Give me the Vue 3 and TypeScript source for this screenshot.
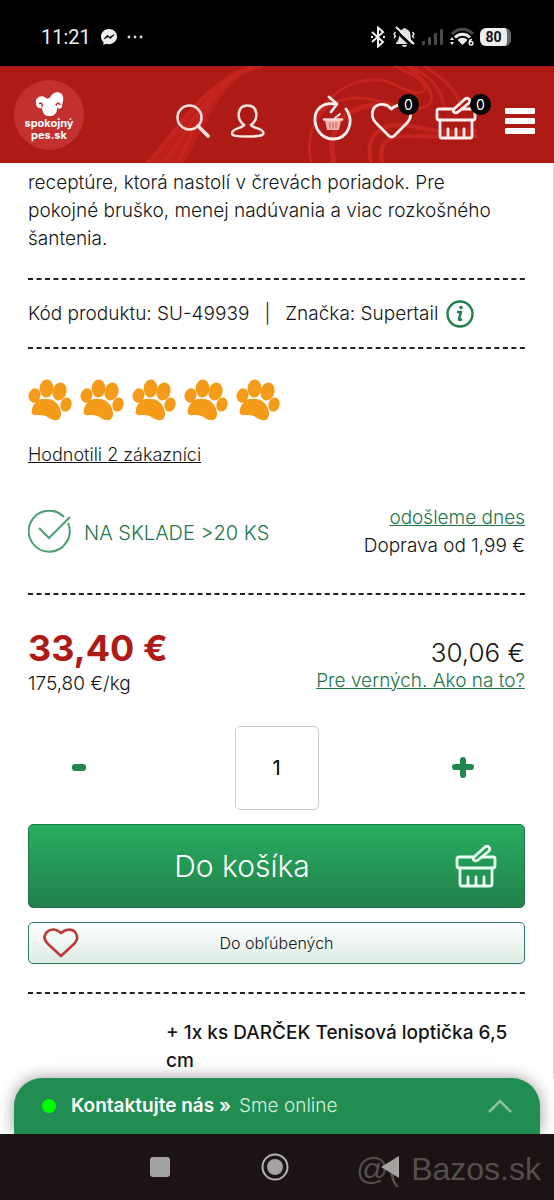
<script setup lang="ts">
import { ref } from 'vue'

const quantity = ref('1')
const paws = [1, 2, 3, 4, 5]

function step(delta: number): void {
  const next = (parseInt(quantity.value, 10) || 1) + delta
  quantity.value = String(Math.max(1, next))
}
</script>

<template>
  <div class="screen">
    <div class="status">
      <span class="time">11:21</span>
      <svg class="messenger" width="16" height="16" viewBox="0 0 16 16">
        <path d="M8 0C3.500 0 0 3.300 0 7.600c0 2.300 1 4.200 2.500 5.600V16l2.700-1.200c.9.300 1.800.400 2.800.400 4.500 0 8-3.300 8-7.600S12.500 0 8 0z" fill="#eee" />
        <path d="M3 9.800l3.400-3.600 2.400 2 4.200-2.600-3.500 4-2.400-1.900z" fill="#000" stroke="#000" stroke-width=".8" />
      </svg>
      <svg width="16" height="4" viewBox="0 0 16 4" fill="#ddd">
        <circle cx="2" cy="2" r="1.400" /><circle cx="8" cy="2" r="1.400" /><circle cx="14" cy="2" r="1.400" />
      </svg>
      <div class="indicators">
        <svg width="16" height="22" viewBox="0 0 16 22" fill="none" stroke="#eee" stroke-width="2">
          <path d="M2 6l11 10-5 4.500v-19L13 6 2 16" />
          <path d="M1 11h2M13 11h2" />
        </svg>
        <svg width="24" height="22" viewBox="0 0 24 22">
          <path d="M4 17c2-2 3-4 3-8 0-3 2-5.500 4.500-6V2h2v1c3 .5 5 3 5 6s.5 6 2.500 8v1H4zM10 19h5a2.500 2 0 0 1-5 0z" fill="#e2e2e2" />
          <path d="M2 3l18 17" stroke="#000" stroke-width="3" />
          <path d="M4 1l18 17" stroke="#eee" stroke-width="2" />
          <path d="M3.500 6L2 8l1.500 2L2 12M20.500 6L22 8l-1.500 2 1.500 2" fill="none" stroke="#ddd" stroke-width="1.500" />
        </svg>
        <svg width="22" height="18" viewBox="0 0 22 18" fill="#4a4a4a">
          <rect x="0" y="13" width="3" height="4" rx="1" /><rect x="6" y="9" width="3" height="8" rx="1" />
          <rect x="12" y="5" width="3" height="12" rx="1" /><rect x="18" y="1" width="3" height="16" rx="1" />
        </svg>
        <svg width="24" height="20" viewBox="0 0 24 20">
          <path d="M2 7c6-6.500 15-6.500 21 0" fill="none" stroke="#4a4a4a" stroke-width="3" />
          <path d="M5 10.500c4-4.500 11-4.500 15 0" fill="none" stroke="#eee" stroke-width="3" />
          <path d="M7.500 13c2.500-3 7.500-3 10 0l-5 5z" fill="#eee" />
          <path d="M0 13l2-3 2 3zM0 15l2 3 2-3z" fill="#eee" />
          <path d="M22 12.500c-3-.5-4 5.500-1 5.500 2.500 0 2.500-3.500 0-3.500-1 0-1.500 1-1.500 1" fill="none" stroke="#000" stroke-width="4" />
          <path d="M22 12.500c-3-.5-4 5.500-1 5.500 2.500 0 2.500-3.500 0-3.500-1 0-1.500 1-1.500 1" fill="none" stroke="#eee" stroke-width="1.500" />
        </svg>
        <span class="battery">80</span>
      </div>
    </div>

    <header class="header">
      <svg class="swirl" viewBox="0 0 554 97" preserveAspectRatio="none" fill="none" stroke="#c6241f">
        <path d="M145 97C178 65 205 8 262 -1l-10 2C218 22 206 60 184 97z" fill="#be211c" stroke="none" />
        <path d="M148 97C180 62 208 8 262 0M164 97C190 62 208 18 252 1M178 97C195 62 210 22 250 1" stroke-width="4" />
        <path d="M318 48C334 22 358 12 380 14c18 2 28 16 42 12 9-4-2-16-28-26" stroke-width="3" />
        <path d="M311 97c-6-30 6-58 32-63 34-8 50 12 78 8 20-4 10-24-14-42" stroke-width="3" />
        <path d="M334 97c-8-32 8-56 42-58" stroke-width="5" />
        <path d="M424 0c18 12 32 22 38 42M408 0c20 8 34 22 36 42" stroke-width="3" />
        <path d="M371 97c-6-24 6-40 32-38 20 2 38 10 74 6M382 97c-4-20 6-28 28-27 20 0 36 2 68 0" stroke-width="4" />
      </svg>
      <a class="logo" href="#">
        <svg width="30" height="26" viewBox="0 0 30 26">
          <path d="M12 7c2 1 4 0 5-2 3-5 11-5 12 1 1 4-1 6-1 9s-4 4-5 1c0 3 0 5-2 7-3 3-8 3-11 0-1-2-2-4-2-6-3 1-6-1-6-5C1 7 7 3 12 7z" fill="#fff" />
          <path d="M5 13c2-2 4 0 3 3M22 15c0-3 3-4 4-1" fill="none" stroke="#c2312d" stroke-width="1.500" />
        </svg>
        <span class="logo-name">spokojný<br />pes.sk</span>
      </a>
      <div class="group account">
        <button class="icon" aria-label="Hľadať">
          <svg width="34" height="34" viewBox="0 0 34 34" fill="none" stroke="#ffe4e0" stroke-width="2.500">
            <circle cx="13.500" cy="13.500" r="12" /><path d="M22 22l10 10" stroke-width="3.500" stroke-linecap="round" />
          </svg>
        </button>
        <button class="icon" aria-label="Účet">
          <svg width="34" height="34" viewBox="0 0 34 34" fill="none" stroke="#ffe4e0" stroke-width="2.500">
            <path d="M13 21C5 15 6 1.500 16.500 1.500S28 15 20 21c1 3 12 3 12.500 8 0 3-5 3.500-16 3.500S.5 32 1 29c.5-5 11-5 12-8z" />
          </svg>
        </button>
      </div>
      <div class="group shop">
        <button class="icon reorder" aria-label="Objednať znova">
          <svg width="40" height="46" viewBox="0 0 40 46" fill="none" stroke="#fff0ee" stroke-width="2.800" stroke-linecap="round" stroke-linejoin="round">
            <path d="M22 9C9 7 1 15 2 26c1 11 9 18 18 18 15 0 22-17 13-30" />
            <path d="M16 2l8 7-6 8" />
            <path d="M12 25h16l-2 10H14z" fill="#eeb0aa" stroke="none" />
            <path d="M11 24.500h18" stroke="#ffd6d1" stroke-width="2.500" />
            <path d="M17 28v5M20 28v5M23 28v5" stroke="#c2554e" stroke-width="1" />
            <path d="M22 23l5-4" stroke-width="1.800" />
          </svg>
        </button>
        <button class="icon wide" aria-label="Obľúbené">
          <svg width="42" height="38" viewBox="0 0 42 38" fill="none" stroke="#fff0ee" stroke-width="2.800" stroke-linejoin="round">
            <path d="M20.500 7C25 2 34 2 37 6c5 7 2 12-2 16L23 34q-2.500 2-5 0L6 22C1 17 0 11 3 6c5-6 13-4 17.500 1z" />
          </svg>
          <span class="badge">0</span>
        </button>
        <button class="icon basket" aria-label="Košík">
          <svg width="42" height="44" viewBox="0 0 42 44" fill="none" stroke="#fff0ee" stroke-width="2.800" stroke-linejoin="round" stroke-linecap="round">
            <path d="M19 13H4q-2 0-2 2v7q0 2 2 2h34q2 0 2-2v-7q0-2-2-2H27" />
            <path d="M5 24v16q0 2 2 2h28q2 0 2-2V24M13 41v-8M21 41v-8M29 41v-8" />
            <path d="M19 13L30 3c3-2 6 1 4 4L23 16c-3 2-6 0-4-3z" />
          </svg>
          <span class="badge">0</span>
        </button>
        <button class="icon" aria-label="Menu">
          <svg width="30" height="28" viewBox="0 0 30 28" fill="#fff">
            <rect y="1" width="30" height="6" rx="1" /><rect y="11" width="30" height="6" rx="1" /><rect y="21" width="30" height="6" rx="1" />
          </svg>
        </button>
      </div>
    </header>

    <main class="product">
      <p class="description">receptúre, ktorá nastolí v črevách poriadok. Pre pokojné bruško, menej nadúvania a viac rozkošného šantenia.</p>
      <svg class="rule"><line x1="0" y1="1" x2="100%" y2="1" /></svg>
      <div class="codes">
        <span>Kód produktu: SU-49939</span>
        <span class="bar">|</span>
        <span>Značka: Supertail</span>
        <svg class="info" width="28" height="28" viewBox="0 0 28 28" fill="none" stroke="#21804c">
          <circle cx="14" cy="14" r="12.500" stroke-width="2.400" />
          <path d="M11 12h4l-2 7q0 2 3 0" stroke-width="2.600" stroke-linejoin="round" />
          <circle cx="15" cy="7.500" r="1.800" fill="#21804c" stroke="none" />
        </svg>
      </div>
      <svg class="rule"><line x1="0" y1="1" x2="100%" y2="1" /></svg>

      <div class="paws">
        <svg v-for="paw in paws" :key="paw" width="44" height="42" viewBox="0 0 44 42" fill="#f49c1a">
          <ellipse cx="6.500" cy="16.500" rx="5.900" ry="7.200" transform="rotate(15 6.500 16.500)" />
          <ellipse cx="18.500" cy="9.500" rx="6.900" ry="9" transform="rotate(4 18.500 9.500)" />
          <ellipse cx="31.500" cy="12.500" rx="7" ry="9" transform="rotate(16 31.500 12.500)" />
          <ellipse cx="38" cy="25.500" rx="5.500" ry="7.200" transform="rotate(15 38 25.500)" />
          <path d="M4 30c2-8 8-11 15-10 9 0 14 8 14 15 0 8-8 7-12 4-4-3-7-3-12-3-5 1-6-2-5-6z" />
        </svg>
      </div>
      <a class="reviews" href="#">Hodnotili 2 zákazníci</a>

      <div class="stock">
        <svg width="44" height="44" viewBox="0 0 44 44" fill="none" stroke="#4c9f73" stroke-width="2">
          <path d="M36 7A20.500 20.500 0 1 0 40 13" /><path d="M11 18l10 10L42 7" />
        </svg>
        <span class="available">NA SKLADE &gt;20 KS</span>
        <div class="delivery">
          <a href="#">odošleme dnes</a>
          <span>Doprava od 1,99 €</span>
        </div>
      </div>
      <svg class="rule"><line x1="0" y1="1" x2="100%" y2="1" /></svg>

      <div class="prices">
        <div>
          <strong class="price">33,40 €</strong>
          <span>175,80 €/kg</span>
        </div>
        <div class="loyal">
          <span class="loyal-price">30,06 €</span>
          <a href="#">Pre verných. Ako na to?</a>
        </div>
      </div>

      <div class="quantity">
        <button class="step less" aria-label="Menej" @click="step(-1)">
          <svg width="22" height="22" viewBox="0 0 22 22"><rect x="4" y="7" width="14" height="7" rx="3" fill="#21874c" /></svg>
        </button>
        <input v-model="quantity" aria-label="Množstvo" type="text" inputmode="numeric" />
        <button class="step more" aria-label="Viac" @click="step(1)">
          <svg width="22" height="22" viewBox="0 0 22 22"><path d="M11 3v15M3 10h16" stroke="#21874c" stroke-width="6" stroke-linecap="round" /></svg>
        </button>
      </div>

      <button class="buy">
        <span>Do košíka</span>
        <svg width="42" height="44" viewBox="0 0 42 44" fill="none" stroke="#e6fff0" stroke-width="2.800" stroke-linejoin="round" stroke-linecap="round">
          <path d="M19 13H4q-2 0-2 2v7q0 2 2 2h34q2 0 2-2v-7q0-2-2-2H27" />
          <path d="M5 24v16q0 2 2 2h28q2 0 2-2V24M13 41v-8M21 41v-8M29 41v-8" />
          <path d="M19 13L30 3c3-2 6 1 4 4L23 16c-3 2-6 0-4-3z" />
        </svg>
      </button>
      <button class="favourite">
        <svg width="36" height="30" viewBox="0 0 36 30" fill="none" stroke="#bd3a39" stroke-width="2.600" stroke-linejoin="round">
          <path d="M18 5C22 1 29 .5 32 4c4 5 2 9-1 12L18 28 5 16C1 12 0 8 4 4c4-4 10-3 14 1z" />
        </svg>
        <span>Do obľúbených</span>
      </button>
      <svg class="rule"><line x1="0" y1="1" x2="100%" y2="1" /></svg>
      <p class="gift">+ 1x ks DARČEK Tenisová loptička 6,5 cm</p>
    </main>

    <button class="chat">
      <span class="dot"></span>
      <strong>Kontaktujte nás »</strong>
      <span class="online">Sme online</span>
      <svg width="24" height="14" viewBox="0 0 24 14" fill="none" stroke="#8fbf9f" stroke-width="2.500"><path d="M1 13L12 2l11 11" /></svg>
    </button>

    <nav class="system">
      <svg width="28" height="28" viewBox="0 0 28 28"><rect x="4" y="4" width="20" height="20" rx="3" fill="#a5a2a2" /></svg>
      <svg width="28" height="28" viewBox="0 0 28 28"><circle cx="14" cy="14" r="12.500" fill="none" stroke="#b5b2b2" stroke-width="2" /><circle cx="14" cy="14" r="8" fill="#a5a2a2" /></svg>
      <svg width="28" height="28" viewBox="0 0 28 28"><path d="M5 14L23 3v22z" fill="#a5a2a2" /></svg>
      <span class="watermark"><span>@(</span><span>Bazos.sk</span></span>
    </nav>
  </div>
</template>

<style>
body {
  margin: 0;
  background: #fff;
}
</style>

<style scoped>
.screen {
  min-height: 100vh;
  display: flex;
  flex-direction: column;
  font-family: Inter, "Open Sans", sans-serif;
  font-size: 19px;
  font-weight: 300;
  line-height: 28px;
  color: #161616;
}
button {
  padding: 0;
  border: 0;
  background: none;
  font: inherit;
  color: inherit;
  cursor: pointer;
}
svg {
  display: block;
  flex: none;
}
.status {
  display: flex;
  align-items: center;
  gap: 10px;
  height: 58px;
  padding: 8px 43px 0 41px;
  background: #000;
  color: #eee;
}
.time {
  font: 400 20px/24px Roboto, sans-serif;
}
.indicators {
  display: flex;
  align-items: center;
  gap: 6px;
  margin-left: auto;
}
.battery {
  width: 31px;
  box-sizing: border-box;
  border-right: 4px solid #666;
  border-radius: 6px;
  background: #eee;
  color: #111;
  font: 700 14px/18px Roboto, sans-serif;
  text-align: center;
}
.header {
  position: relative;
  display: flex;
  align-items: center;
  height: 97px;
  padding: 0 19px 0 14px;
  background: #ae1b17;
}
.swirl {
  position: absolute;
  inset: 0;
  width: 100%;
  height: 100%;
}
.logo {
  position: relative;
  display: flex;
  flex-direction: column;
  align-items: center;
  width: 70px;
  height: 59px;
  padding-top: 11px;
  border-radius: 50%;
  background: #c2312d;
  color: #fff;
  text-decoration: none;
}
.logo-name {
  font: 700 11px/12px Inter, sans-serif;
  text-align: center;
}
.group {
  position: relative;
  display: flex;
  align-items: center;
}
.account {
  gap: 21px;
  margin: 12px 0 0 auto;
}
.shop {
  gap: 18px;
  margin: 12px 0 0 48px;
}
.icon {
  position: relative;
}
.reorder {
  margin-bottom: 6px;
}
.wide {
  width: 46px;
}
.basket {
  width: 52px;
  margin-bottom: 6px;
}
.badge {
  position: absolute;
  top: -8px;
  right: -2px;
  width: 21px;
  border-radius: 50%;
  background: #000;
  color: #fff;
  font-size: 14px;
  font-weight: 400;
  line-height: 21px;
}
.basket .badge {
  top: -2px;
  right: -4px;
}
.product {
  flex: 1;
  display: flex;
  flex-direction: column;
  padding: 6px 28px 0;
  border-right: 1px solid #d8d8d8;
}
.description {
  margin: 0 0 25px;
  padding-right: 14px;
}
.rule {
  width: 100%;
  height: 2px;
}
.rule line {
  stroke: #222;
  stroke-width: 2;
  stroke-dasharray: 5 3.480;
}
.codes {
  display: flex;
  align-items: center;
  height: 67px;
}
.bar {
  margin: 0 15px;
}
.info {
  margin-left: 8px;
}
.paws {
  display: flex;
  gap: 8px;
  margin-top: 30px;
}
.reviews {
  align-self: flex-start;
  margin-top: 20px;
  color: inherit;
  font-size: 18px;
}
.stock {
  display: flex;
  align-items: center;
  margin: 35px 0 33px;
}
.available {
  margin: 2px 0 0 12px;
  color: #21764a;
  font-size: 20px;
}
.delivery,
.loyal {
  display: flex;
  flex-direction: column;
  align-items: flex-end;
  margin-left: auto;
}
.delivery a,
.loyal a {
  color: #21764a;
}
.prices {
  display: flex;
  margin-top: 31px;
}
.price {
  display: block;
  color: #ae1b17;
  font-size: 36px;
  font-weight: 700;
  line-height: 44px;
}
.loyal {
  padding-top: 13px;
}
.loyal-price {
  font-size: 26px;
}
.quantity {
  display: grid;
  grid-template-columns: 1fr 84px 1fr;
  align-items: center;
  margin: 28px 0 14px;
}
.step {
  width: 44px;
  height: 44px;
  display: grid;
  place-items: center;
}
.less {
  margin-left: 29px;
}
.more {
  justify-self: end;
  margin-right: 40px;
}
.quantity input {
  height: 84px;
  box-sizing: border-box;
  min-width: 0;
  border: 1px solid #ccc;
  border-radius: 5px;
  background: #fff;
  color: #000;
  font: 400 20px/28px Inter, sans-serif;
  text-align: center;
}
.buy {
  display: grid;
  grid-template-columns: 1fr 42px;
  align-items: center;
  height: 84px;
  padding: 0 27px 0 0;
  border: 1px solid #21764a;
  border-radius: 5px;
  background: linear-gradient(#28ae60, #21804a);
  color: #fff;
  font-size: 30px;
}
.favourite {
  display: grid;
  grid-template-columns: 36px 1fr 36px;
  align-items: center;
  height: 42px;
  margin: 14px 0 28px;
  padding: 0 14px;
  border: 1px solid #2b8058;
  border-radius: 5px;
  background: linear-gradient(#fff, #dcebe4);
  font-size: 16px;
}
.gift {
  margin: 25px 0 0 138px;
  font-weight: 500;
}
.chat {
  display: flex;
  align-items: center;
  height: 56px;
  margin: 0 14px;
  padding: 0 28px;
  border-radius: 28px 28px 0 0;
  background: #218d50;
  color: #fff;
  box-shadow: 0 0 16px rgba(0, 0, 0, 0.4);
}
.chat strong {
  font-weight: 600;
}
.dot {
  width: 14px;
  height: 14px;
  margin-right: 15px;
  border-radius: 50%;
  background: #0f0;
}
.online {
  margin-left: 8px;
  color: #d5f0df;
}
.chat svg {
  margin-left: auto;
}
.system {
  position: relative;
  display: flex;
  justify-content: center;
  align-items: center;
  gap: 87px;
  height: 66px;
  padding-right: 4px;
  background: #1b1314;
}
.watermark {
  position: absolute;
  right: 13px;
  bottom: 13px;
  display: flex;
  gap: 12px;
  color: rgba(160, 155, 155, 0.45);
  font: 400 32px/36px "Liberation Sans", sans-serif;
}
</style>
